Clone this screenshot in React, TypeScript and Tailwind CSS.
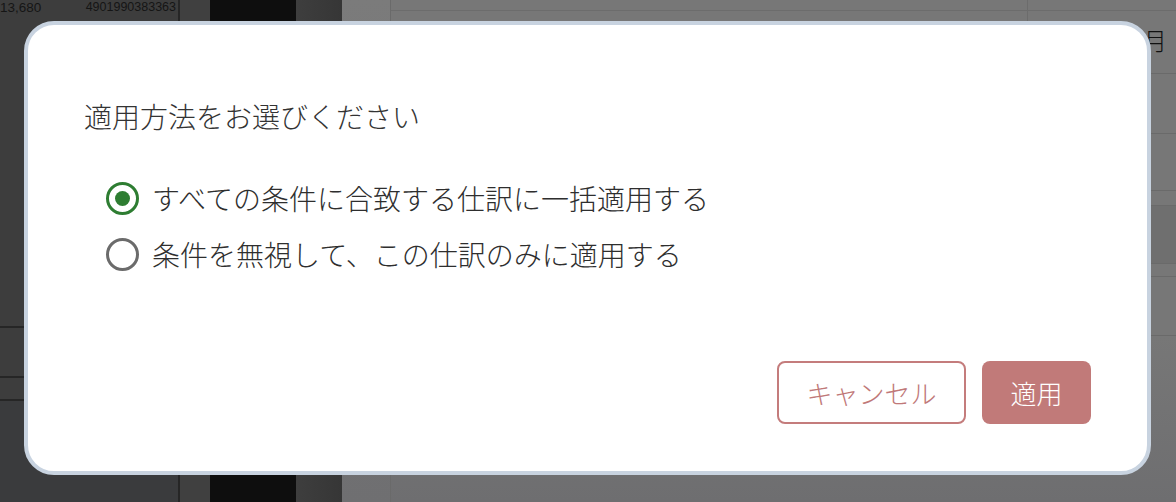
import { useState } from "react";

const options = [
  { id: "all", label: "すべての条件に合致する仕訳に一括適用する" },
  { id: "one", label: "条件を無視して、この仕訳のみに適用する" },
];

function Radio({ checked }: { checked: boolean }) {
  return (
    <span
      className={`flex h-[33px] w-[33px] shrink-0 items-center justify-center rounded-full border-[3.5px] ${
        checked ? "border-[#2e7d32]" : "border-[#6b6b6b]"
      }`}
    >
      {checked && <span className="h-[15px] w-[15px] rounded-full bg-[#2e7d32]" />}
    </span>
  );
}

export default function App() {
  const [selected, setSelected] = useState("all");

  return (
    <div className="relative h-[502px] w-[1176px] overflow-hidden font-['Noto_Sans_CJK_JP','Noto_Sans',sans-serif]">
      {/* Dimmed page behind the dialog */}
      <div className="flex h-full w-full">
        <div className="flex w-[178px] flex-col bg-[#3d3d3d] font-['Liberation_Sans',sans-serif]">
          <div className="flex h-[15px] items-center justify-between text-[13.5px] leading-[15px] text-[#151515]">
            <span>13,680</span>
            <span className="pr-[2px] text-[12.5px]">4901990383363</span>
          </div>
          <div className="h-[311px]" />
          <div className="h-[50px] border-t-2 border-[#262626]" />
          <div className="h-[23px] border-t-2 border-[#262626]" />
          <div className="flex-1 border-t-2 border-[#262626] bg-[#3a3b3d]" />
        </div>
        <div className="w-[2px] bg-[#262626]" />
        <div className="w-[30px] bg-[#404040]" />
        <div className="w-[86px] bg-[#0e0e0e]" />
        <div className="w-[46px] bg-gradient-to-r from-[#3e3e3e] to-[#363636]" />
        <div className="w-[48px] bg-gradient-to-b from-[#7b7b7b] to-[#6f6f71]" />
        <div className="w-px bg-[#6a6a6a]" />
        <div className="flex flex-1 flex-col bg-[#777777]">
          <div className="flex h-[21px] flex-col">
            <div className="flex h-[11px] border-b border-[#6c6c6c]">
              <div className="w-[637px] border-r border-[#6c6c6c]" />
            </div>
            <div className="flex flex-1">
              <div className="w-[637px] border-r border-[#6c6c6c]" />
            </div>
          </div>
          <div className="flex h-[52px] items-start justify-end pr-[9px] pt-[4px] text-[24px] leading-[30px] font-light text-[#111]">
            月
          </div>
          <div className="h-[60px] border-t border-[#6a6a6a]" />
          <div className="h-[57px] border-t border-[#6a6a6a]" />
          <div className="h-[15px] border-t border-[#6a6a6a]" />
          <div className="h-[58px] border-t border-[#6a6a6a] bg-[#6f6f6f]" />
          <div className="h-[13px] border-t border-[#6a6a6a]" />
          <div className="h-[59px] border-t border-[#6a6a6a]" />
          <div className="flex-1 border-t border-[#6a6a6a] bg-gradient-to-b from-[#777] to-[#6e6e70]" />
        </div>
      </div>

      {/* Dialog */}
      <div className="absolute inset-0 pl-[24px] pt-[21px]">
        <div className="flex h-[454px] w-[1127px] flex-col rounded-[30px] border-4 border-[#c8d3e0] bg-white px-[56px] pb-[47px] pt-[70px]">
          <h2 className="text-[28px] leading-[42px] font-light text-[#333333]">適用方法をお選びください</h2>

          <div className="mt-[33px] flex flex-col pl-[22px]">
            {options.map((o) => (
              <label
                key={o.id}
                className="flex h-[56px] cursor-pointer items-center gap-[13px]"
                onClick={() => setSelected(o.id)}
              >
                <Radio checked={selected === o.id} />
                <span className="text-[28px] leading-[42px] font-light text-[#2e2e2e]">{o.label}</span>
              </label>
            ))}
          </div>

          <div className="mt-auto flex justify-end gap-[16px]">
            <button className="flex h-[63px] w-[189px] items-center justify-center rounded-[8px] border-2 border-[#c47c7c] bg-white text-[26px] font-light text-[#c07878]">
              キャンセル
            </button>
            <button className="flex h-[63px] w-[109px] items-center justify-center rounded-[8px] bg-[#c17a79] text-[26px] font-light text-white">
              適用
            </button>
          </div>
        </div>
      </div>
    </div>
  );
}
